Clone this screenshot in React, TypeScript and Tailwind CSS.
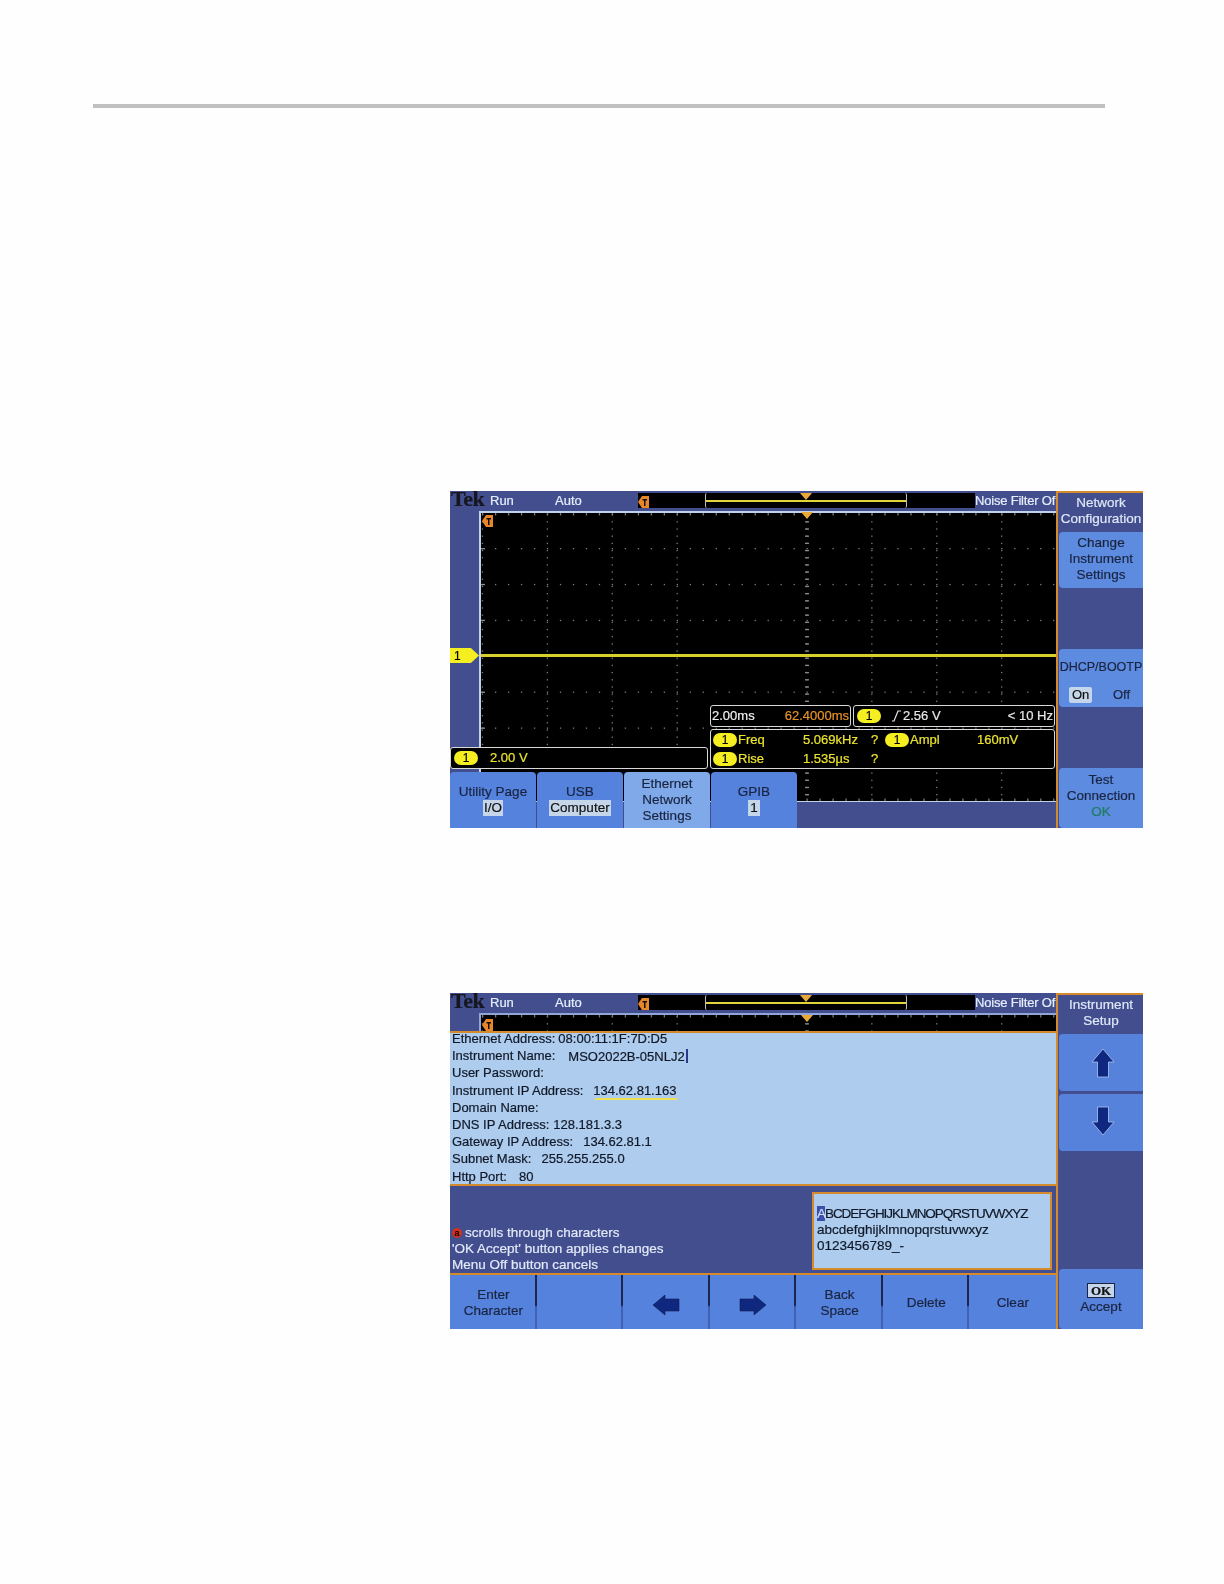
import React from 'react';

const ticksX = Array.from({ length: 45 }, (_, i) => 1 + i * 12.98);
const ticksY = Array.from({ length: 41 }, (_, i) => 1 + i * 7.18);
const divX = [0, 1, 2, 3, 5, 6, 7, 8].map((i) => 0.8 + i * 64.9);
const divY = [1, 2, 3, 4, 5, 6, 7].map((i) => -0.9 + i * 35.9);

function Graticule() {
  return (
    <svg width="575" height="288" className="block">
      <rect width="575" height="288" fill="#000" />
      {divY.map((y) => ticksX.map((x) => <rect key={`${x}-${y}`} x={x} y={y} width="1.3" height="1.3" fill="#7c7c7c" />))}
      {divX.map((x) => ticksY.map((y) => <rect key={`${x}:${y}`} x={x} y={y} width="1.3" height="1.3" fill="#7c7c7c" />))}
      {ticksY.map((y) => <rect key={y} x="324" y={y} width="4" height="1.3" fill="#8a8a8a" />)}
      {divY.map((y) => <rect key={`l${y}`} x="0" y={y} width="4" height="1.3" fill="#8a8a8a" />)}
      {ticksX.map((x) => <rect key={`t${x}`} x={x} y="0" width="1.3" height="2.5" fill="#777" />)}
      {ticksX.map((x) => <rect key={`b${x}`} x={x} y="285.5" width="1.3" height="2.5" fill="#777" />)}
    </svg>
  );
}

function OrangeMark({ className }: { className: string }) {
  return (
    <svg width="11" height="12" viewBox="0 0 11 12" className={className}>
      <path d="M0 6 L4 0 H11 V12 H4 Z" fill="#e8862a" />
      <path d="M4.5 3 H9 V4.5 H7.5 V10 H6 V4.5 H4.5 Z" fill="#111" />
    </svg>
  );
}

function DownMark({ className }: { className: string }) {
  return (
    <svg width="12" height="7" viewBox="0 0 12 7" className={className}>
      <path d="M0 0 H12 L6 7 Z" fill="#e9a93a" />
    </svg>
  );
}

function Pill() {
  return <span className="inline-flex w-[24px] h-[14px] shrink-0 items-center justify-center rounded-[7px] bg-[#f5ee20] text-black text-[12px] leading-none">1</span>;
}

function TopBar() {
  return (
    <div className="flex h-[20px] items-start pl-[1px] shrink-0 text-[13px]">
      <div className="w-[39px] font-['Liberation_Serif'] font-bold text-[22px] leading-[15px] tracking-[-0.4px] text-[#15161f]">Tek</div>
      <div className="w-[65px] pt-[2px] text-[#e6eefa]">Run</div>
      <div className="w-[83px] pt-[2px] text-[#e6eefa]">Auto</div>
      <div className="relative mt-[2px] flex h-[15px] w-[337px] shrink-0 items-center bg-black">
        <OrangeMark className="absolute left-0 top-[3px]" />
        <div className="absolute left-[67px] top-0 h-full w-[202px] rounded-[2px] border-x border-[#bdbdbd] flex items-center">
          <div className="h-[2px] w-full bg-[#e0d63a]" />
        </div>
        <DownMark className="absolute left-[162px] top-0" />
      </div>
      <div className="w-[81px] whitespace-nowrap pt-[2px] tracking-[-0.2px] text-[#e6eefa]">Noise Filter Of</div>
    </div>
  );
}

function RightHeader({ lines }: { lines: string[] }) {
  return (
    <div className="flex h-[39px] flex-col items-center justify-center pb-[3px] text-center text-[#dfe8f7]">
      {lines.map((l) => <div key={l}>{l}</div>)}
    </div>
  );
}

function BottomButton({ children, active }: { children: React.ReactNode; active?: boolean }) {
  return (
    <div className={`flex w-[86px] h-[56px] flex-col items-center justify-center rounded-t-[4px] text-center text-[#1a2440] ${active ? 'bg-[#7fa9e9]' : 'bg-[#5482dc]'}`}>
      {children}
    </div>
  );
}

function ScopeScreen() {
  return (
    <div className="flex h-[337px] w-[693px] overflow-hidden bg-[#434e8f] text-[13.5px] leading-[16px] blur-[0.4px] [-webkit-text-stroke:0.2px]">
      <div className="flex w-[606px] flex-col">
        <TopBar />
        <div className="relative flex-1">
          <div className="ml-[29px] w-[577px] border-t-2 border-l-2 border-b border-[#c0d2ec]">
            <Graticule />
          </div>
          {/* trace */}
          <div className="absolute left-[31px] right-0 top-[143px] h-[3px] bg-[#d8ce2c]" />
          <OrangeMark className="absolute left-[32px] top-[4px]" />
          <DownMark className="absolute left-[351px] top-[1px]" />
          {/* ch1 marker */}
          <div className="absolute left-0 top-[137px] flex h-[15px] w-[29px] items-center bg-[#f5ee20] pl-1 text-[12px] text-black [clip-path:polygon(0_0,72%_0,100%_50%,72%_100%,0_100%)]">1</div>

          <div className="absolute left-[260px] top-[194px] flex h-[22px] w-[141px] items-center justify-between rounded-[3px] border border-[#d8d8d8] bg-black pl-[1px] pr-[1px] text-[13px]">
            <span className="text-[#f0f0f0]">2.00ms</span>
            <span className="text-[#e8922c]">62.4000ms</span>
          </div>
          <div className="absolute left-[403px] top-[194px] flex h-[22px] w-[202px] items-center rounded-[3px] border border-[#d8d8d8] bg-black pl-[3px] pr-[1px] text-[13px] text-[#e8e8e8]">
            <Pill />
            <svg width="12" height="12" viewBox="0 0 12 12" className="ml-[9px] mr-[1px]">
              <path d="M2 11 H4 L8 1 H11" fill="none" stroke="#e8e8e8" strokeWidth="1.2" />
            </svg>
            <span>2.56 V</span>
            <span className="ml-auto">&lt; 10 Hz</span>
          </div>
          <div className="absolute left-[260px] top-[218px] flex h-[40px] w-[345px] flex-col justify-center gap-[3px] rounded-[3px] border border-[#d8d8d8] bg-black pl-[2px] text-[13px] text-[#ebe32e]">
            <div className="flex items-center h-[16px]">
              <Pill />
              <span className="w-[66px] pl-[1px]">Freq</span>
              <span className="w-[68px]">5.069kHz</span>
              <span className="w-[14px]">?</span>
              <Pill />
              <span className="w-[68px] pl-[1px]">Ampl</span>
              <span>160mV</span>
            </div>
            <div className="flex items-center h-[16px]">
              <Pill />
              <span className="w-[66px] pl-[1px]">Rise</span>
              <span className="w-[68px]">1.535µs</span>
              <span className="w-[14px]">?</span>
            </div>
          </div>
          <div className="absolute left-0 top-[236px] flex h-[22px] w-[258px] items-center rounded-[3px] border border-[#d8d8d8] bg-black pl-[3px] text-[13px] text-[#ebe32e]">
            <Pill />
            <span className="ml-[12px]">2.00 V</span>
          </div>
          <div className="absolute bottom-0 left-0 flex gap-px">
            <BottomButton>
              <div>Utility Page</div>
              <div className="bg-[#c6d6ea] px-[1px] text-[#111]">I/O</div>
            </BottomButton>
            <BottomButton>
              <div>USB</div>
              <div className="bg-[#c6d6ea] px-[1px] text-[#111]">Computer</div>
            </BottomButton>
            <BottomButton active>
              <div>Ethernet</div>
              <div>Network</div>
              <div>Settings</div>
            </BottomButton>
            <BottomButton>
              <div>GPIB</div>
              <div className="bg-[#c6d6ea] px-[2px] text-[#111]">1</div>
            </BottomButton>
          </div>
        </div>
      </div>
      <div className="flex w-[87px] flex-col border-l-2 border-t-2 border-[#d58a2c] pl-[1px]">
        <RightHeader lines={['Network', 'Configuration']} />
        <div className="flex h-[56px] flex-col items-center justify-center rounded-l-[4px] bg-[#5d8be0] pb-[2px] text-center text-[#1a2440]">
          <div>Change</div>
          <div>Instrument</div>
          <div>Settings</div>
        </div>
        <div className="mt-[61px] flex h-[58px] flex-col items-center gap-[12px] rounded-l-[4px] bg-[#5d8be0] pt-[10px] text-[#1a2440]">
          <div className="whitespace-nowrap text-[12.5px]">DHCP/BOOTP</div>
          <div className="flex w-full items-center justify-between pl-[10px] pr-[13px]">
            <span className="rounded-[2px] bg-[#c6d6ea] px-[3px] text-[13px] text-[#111]">On</span>
            <span className="text-[13px]">Off</span>
          </div>
        </div>
        <div className="mt-auto flex h-[60px] flex-col items-center justify-center rounded-l-[4px] bg-[#5d8be0] pb-[5px] text-center text-[#1a2440]">
          <div>Test</div>
          <div>Connection</div>
          <div className="text-[#1f7d5f]">OK</div>
        </div>
      </div>
    </div>
  );
}

const settings: { label: string; value: string; gap: string }[] = [
  { label: 'Ethernet Address:', value: '08:00:11:1F:7D:D5', gap: 'gap-[3px]' },
  { label: 'Instrument Name:', value: 'MSO2022B-05NLJ2', gap: 'gap-[13px]' },
  { label: 'User Password:', value: '', gap: 'gap-0' },
  { label: 'Instrument IP Address:', value: '134.62.81.163', gap: 'gap-[10px]' },
  { label: 'Domain Name:', value: '', gap: 'gap-0' },
  { label: 'DNS IP Address:', value: '128.181.3.3', gap: 'gap-[4px]' },
  { label: 'Gateway IP Address:', value: '134.62.81.1', gap: 'gap-[10px]' },
  { label: 'Subnet Mask:', value: '255.255.255.0', gap: 'gap-[10px]' },
  { label: 'Http Port:', value: '80', gap: 'gap-[12px]' },
];

function ArrowIcon({ dir }: { dir: 'left' | 'right' | 'up' | 'down' }) {
  if (dir === 'left') {
    return (
      <svg width="28" height="20" viewBox="0 0 28 20" className="mt-[4px]">
        <path d="M1 10 L13 0 V4 H27 V16 H13 V20 Z" fill="#10277f" stroke="#10204f" strokeWidth="0.6" />
      </svg>
    );
  }
  if (dir === 'right') {
    return (
      <svg width="28" height="20" viewBox="0 0 28 20" className="mt-[4px]">
        <path d="M27 10 L15 0 V4 H1 V16 H15 V20 Z" fill="#10277f" stroke="#10204f" strokeWidth="0.6" />
      </svg>
    );
  }
  if (dir === 'up') {
    return (
      <svg width="24" height="30" viewBox="0 0 24 30" className="ml-[3px]">
        <path d="M12 1 L23 14 H17.5 V29 H6.5 V14 H1 Z" fill="#10277f" stroke="#a9c6ef" strokeWidth="0.8" />
      </svg>
    );
  }
  return (
    <svg width="24" height="30" viewBox="0 0 24 30" className="ml-[3px] -mt-[3px]">
      <path d="M12 29 L23 16 H17.5 V1 H6.5 V16 H1 Z" fill="#10277f" stroke="#a9c6ef" strokeWidth="0.8" />
    </svg>
  );
}

function KeyCell({ children, last }: { children?: React.ReactNode; last?: boolean }) {
  return (
    <div className="relative flex flex-1 flex-col items-center justify-center pt-[1px] text-center text-[#1a2440]">
      {children}
      {!last && <span className="absolute right-0 top-0 h-full w-[2px] bg-[linear-gradient(to_bottom,#1c2550_0%,#1c2550_55%,#3f62b4_60%,#3f62b4_100%)]" />}
    </div>
  );
}

function SetupScreen() {
  return (
    <div className="flex h-[336px] w-[693px] overflow-hidden bg-[#434e8f] text-[13.5px] leading-[16px] blur-[0.4px] [-webkit-text-stroke:0.2px]">
      <div className="flex w-[606px] flex-col">
        <TopBar />
        <div className="relative h-[18px] shrink-0 overflow-hidden">
          <div className="ml-[29px] w-[577px] border-t-2 border-l-2 border-[#8fa6d6]">
            <Graticule />
          </div>
          <OrangeMark className="absolute left-[32px] top-[6px]" />
          <DownMark className="absolute left-[351px] top-[2px]" />
        </div>
        <div className="h-[155px] shrink-0 border-y-2 border-[#d58a2c] bg-[#aecdee] pl-[2px] text-[13px] text-[#101828] leading-[17.2px]">
          <div className="-mt-[3px]">
            {settings.map(({ label, value, gap }) => (
              <div key={label} className={`flex h-[17.2px] whitespace-nowrap ${gap}`}>
                <span>{label}</span>
                {label === 'Instrument IP Address:' ? (
                  <span className="relative">
                    {value}
                    <span className="absolute left-[2px] top-[16px] h-[2px] w-[82px] bg-[#f0e050]" />
                  </span>
                ) : (
                  <span>
                    {value}
                    {label === 'Instrument Name:' && <span className="ml-[1px] inline-block h-[14px] w-[2px] translate-y-[2px] bg-[#2a3a8a]" />}
                  </span>
                )}
              </div>
            ))}
          </div>
        </div>
        <div className="flex h-[89px] shrink-0 items-end justify-between border-b-2 border-[#d58a2c]">
          <div className="pl-[2px] text-[#e2eaf8] whitespace-nowrap">
            <div className="flex items-center gap-[3px]">
              <span className="inline-flex h-[10px] w-[10px] items-center justify-center rounded-full bg-[#d0301e] text-[9px] leading-none text-black">a</span>
              <span>scrolls through characters</span>
            </div>
            <div>'OK Accept' button applies changes</div>
            <div>Menu Off button cancels</div>
          </div>
          <div className="mb-[3px] mr-[4px] flex h-[78px] w-[240px] flex-col justify-center border-2 border-[#d58a2c] bg-[#aecdee] pb-[2px] pl-[3px] text-[#101828] leading-[16px] whitespace-nowrap">
            <div className="tracking-[-1.05px]">
              <span className="bg-[#3c4fa8] text-[#cfe0f5]">A</span>BCDEFGHIJKLMNOPQRSTUVWXYZ
            </div>
            <div>abcdefghijklmnopqrstuvwxyz</div>
            <div>0123456789_-</div>
          </div>
        </div>
        <div className="flex min-h-0 flex-1 bg-[#5482dc]">
          <KeyCell>
            <div>Enter</div>
            <div>Character</div>
          </KeyCell>
          <KeyCell />
          <KeyCell><ArrowIcon dir="left" /></KeyCell>
          <KeyCell><ArrowIcon dir="right" /></KeyCell>
          <KeyCell>
            <div>Back</div>
            <div>Space</div>
          </KeyCell>
          <KeyCell>Delete</KeyCell>
          <KeyCell last>Clear</KeyCell>
        </div>
      </div>
      <div className="flex w-[87px] flex-col border-l-2 border-t-2 border-[#d58a2c] pl-[1px]">
        <RightHeader lines={['Instrument', 'Setup']} />
        <div className="flex h-[57px] items-center justify-center rounded-l-[4px] bg-[#5682dc]">
          <ArrowIcon dir="up" />
        </div>
        <div className="mt-[3px] flex h-[57px] items-center justify-center rounded-l-[4px] bg-[#5682dc]">
          <ArrowIcon dir="down" />
        </div>
        <div className="mt-auto flex h-[60px] flex-col items-center justify-center gap-[1px] rounded-l-[4px] bg-[#5682dc] text-[#1a2440]">
          <div className="border border-[#1a2440] bg-[#c6d6ea] px-[3px] font-['Liberation_Serif'] text-[13px] font-bold leading-[13px] text-[#111]">OK</div>
          <div>Accept</div>
        </div>
      </div>
    </div>
  );
}

export default function App() {
  return (
    <div className="h-[1584px] w-[1224px] overflow-hidden bg-[#fefefe] pt-[104px] font-['Liberation_Sans',sans-serif]">
      <div className="ml-[93px] h-[4px] w-[1012px] bg-[#c0c0c0]" />
      <div className="ml-[450px] mt-[383px]">
        <ScopeScreen />
      </div>
      <div className="ml-[450px] mt-[165px]">
        <SetupScreen />
      </div>
    </div>
  );
}
